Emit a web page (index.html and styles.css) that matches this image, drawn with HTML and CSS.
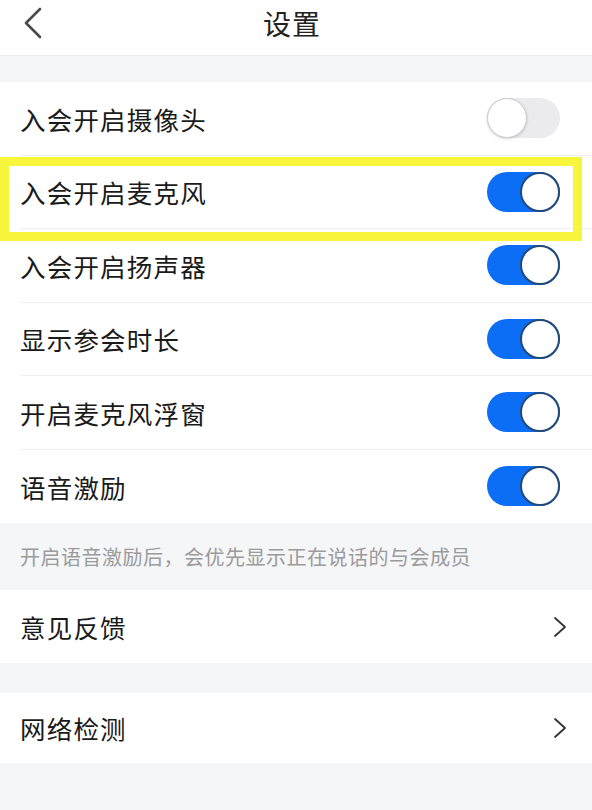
FILE: index.html
```html
<!DOCTYPE html>
<html lang="zh-CN">
<head>
<meta charset="utf-8">
<title>设置</title>
<link rel="stylesheet" href="styles.css">
</head>
<body>
<header class="topbar">
  <div class="back">
    <svg width="20" height="32" viewBox="0 0 20 32"><polyline points="17,2 3,16 17,30" fill="none" stroke="#4a4a4a" stroke-width="2.6" stroke-linecap="round" stroke-linejoin="round"/></svg>
  </div>
  <h1 class="title">设置</h1>
  <div class="spacer"></div>
</header>

<section class="group toggles">
  <div class="row"><span class="label">入会开启摄像头</span><span class="switch off"><span class="knob"></span></span></div>
  <div class="row"><span class="label">入会开启麦克风</span><span class="switch on"><span class="knob"></span></span></div>
  <div class="row"><span class="label">入会开启扬声器</span><span class="switch on"><span class="knob"></span></span></div>
  <div class="row"><span class="label">显示参会时长</span><span class="switch on"><span class="knob"></span></span></div>
  <div class="row"><span class="label">开启麦克风浮窗</span><span class="switch on"><span class="knob"></span></span></div>
  <div class="row last"><span class="label">语音激励</span><span class="switch on"><span class="knob"></span></span></div>
  <div class="highlight"></div>
</section>

<p class="note">开启语音激励后，会优先显示正在说话的与会成员</p>

<section class="group">
  <div class="row link last"><span class="label">意见反馈</span>
    <svg class="chev" width="14" height="22" viewBox="0 0 14 22"><polyline points="2,2 12,11 2,20" fill="none" stroke="#333" stroke-width="1.8" stroke-linecap="round" stroke-linejoin="round"/></svg>
  </div>
</section>

<section class="group gap">
  <div class="row link last short"><span class="label">网络检测</span>
    <svg class="chev" width="14" height="22" viewBox="0 0 14 22"><polyline points="2,2 12,11 2,20" fill="none" stroke="#333" stroke-width="1.8" stroke-linecap="round" stroke-linejoin="round"/></svg>
  </div>
</section>
</body>
</html>
```

FILE: styles.css
```css
html, body {
  margin: 0;
  padding: 0;
}
body {
  background: #f5f6f8;
  font-family: "Noto Sans CJK SC", "Noto Sans", sans-serif;
  color: #1a1a1a;
  width: 592px;
  height: 810px;
  overflow: hidden;
}
.topbar {
  height: 55px;
  background: #fff;
  border-bottom: 1px solid #ececec;
  display: grid;
  grid-template-columns: 80px 1fr 88px;
  align-items: center;
}
.back {
  padding-left: 23px;
  display: flex;
  align-items: center;
  height: 55px;
  margin-top: -10px;
}
.title {
  margin: 0;
  text-align: center;
  font-size: 28px;
  font-weight: 400;
  color: #222;
  line-height: 1;
  letter-spacing: 1px;
  margin-top: -10px;
}
.group {
  background: #fff;
  margin-top: 26px;
  position: relative;
}
.group.gap {
  margin-top: 30px;
}
.row {
  height: 73.5px;
  margin-left: 20px;
  padding-right: 32px;
  box-sizing: border-box;
  border-bottom: 1px solid #efefef;
  display: flex;
  align-items: center;
  justify-content: space-between;
}
.row.last {
  border-bottom: none;
}
.row.link {
  height: 73px;
  padding-right: 25px;
}
.row.short {
  height: 70px;
}
.label {
  font-size: 25.5px;
  line-height: 1;
  letter-spacing: 1.2px;
}
.switch {
  width: 73px;
  height: 40px;
  border-radius: 20px;
  display: flex;
  align-items: center;
  box-sizing: border-box;
}
.switch.on {
  background: #0b6ef5;
  justify-content: flex-end;
}
.switch.off {
  background: #ebebed;
  justify-content: flex-start;
}
.knob {
  width: 40px;
  height: 40px;
  border-radius: 50%;
  background: #fff;
  box-sizing: border-box;
}
.switch.on .knob {
  border: 2.5px solid #234a78;
}
.switch.off .knob {
  border: 1.5px solid #c9c9cc;
  box-shadow: 0 1px 3px rgba(0,0,0,0.15);
}
.highlight {
  position: absolute;
  left: 0;
  top: 75px;
  width: 582px;
  height: 84px;
  border: 9px solid #f7f63c;
  box-sizing: border-box;
  pointer-events: none;
}
.note {
  margin: 0;
  height: 67px;
  padding-left: 20px;
  display: flex;
  align-items: center;
  font-size: 20px;
  letter-spacing: 0.5px;
  color: #9b9b9b;
}
.note + .group {
  margin-top: 0;
}
.chev {
  display: block;
}
```
